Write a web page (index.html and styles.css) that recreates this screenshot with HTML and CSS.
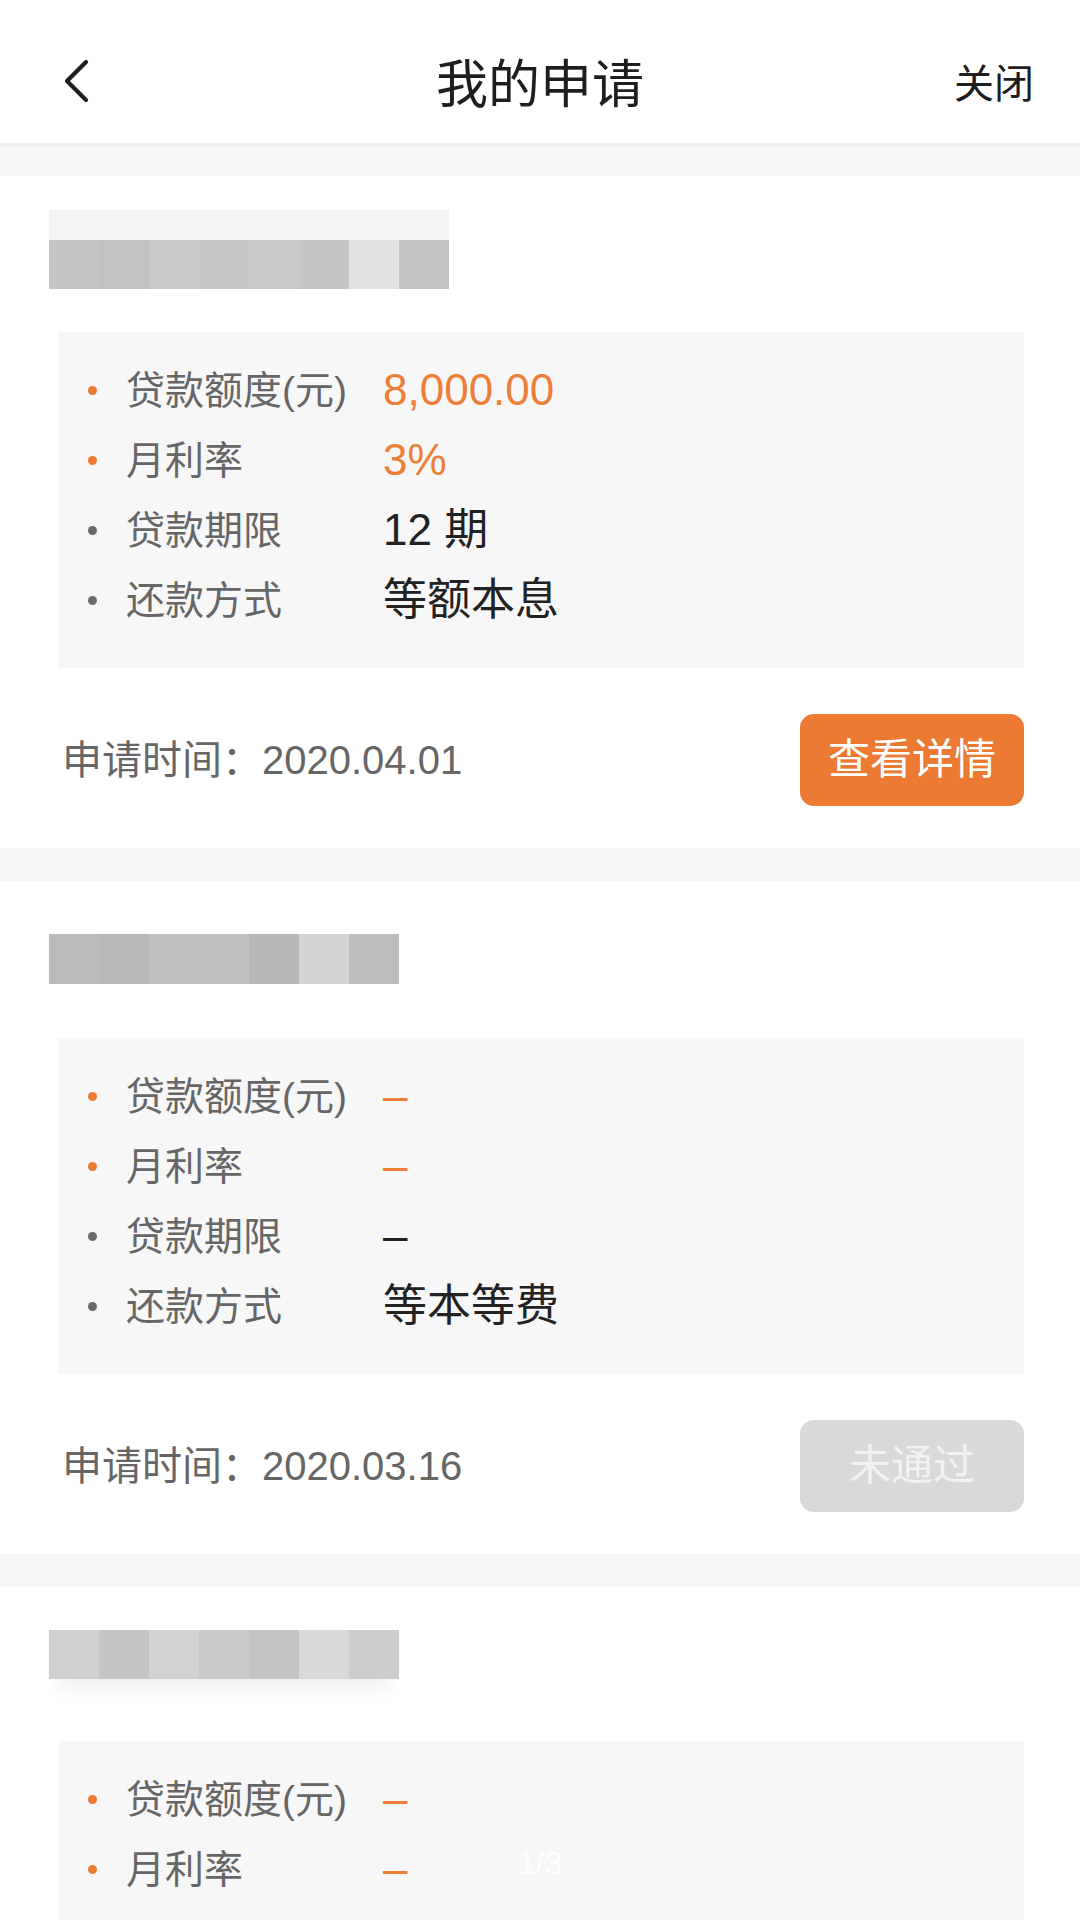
FILE: index.html
```html
<!DOCTYPE html>
<html lang="zh-CN">
<head>
<meta charset="utf-8">
<title>我的申请</title>
<link rel="stylesheet" href="styles.css">
</head>
<body>
<div class="page">
  <header class="nav">
    <span class="nav-back">
      <svg width="28" height="44" viewBox="0 0 28 44"><path d="M24 3 L5 22 L24 41" fill="none" stroke="#1e1e1e" stroke-width="4.2" stroke-linecap="round" stroke-linejoin="round"/></svg>
    </span>
    <h1 class="nav-title">我的申请</h1>
    <span class="nav-close">关闭</span>
  </header>

  <main class="list">
    <section class="card">
      <div class="name name--a">
        <i class="px c1"></i><i class="px c2"></i><i class="px c3"></i><i class="px c4"></i><i class="px c5"></i><i class="px c6"></i><i class="px c7"></i><i class="px c8"></i>
      </div>
      <ul class="terms">
        <li class="term term--hi"><span class="dot"></span><span class="term-label">贷款额度(元)</span><span class="term-value">8,000.00</span></li>
        <li class="term term--hi"><span class="dot"></span><span class="term-label">月利率</span><span class="term-value">3%</span></li>
        <li class="term"><span class="dot"></span><span class="term-label">贷款期限</span><span class="term-value">12 期</span></li>
        <li class="term"><span class="dot"></span><span class="term-label">还款方式</span><span class="term-value">等额本息</span></li>
      </ul>
      <div class="card-foot">
        <span class="apply-time">申请时间：2020.04.01</span>
        <span class="btn btn--primary">查看详情</span>
      </div>
    </section>

    <section class="card">
      <div class="name name--b">
        <i class="px d1"></i><i class="px d2"></i><i class="px d3"></i><i class="px d4"></i><i class="px d5"></i><i class="px d6"></i><i class="px d7"></i>
      </div>
      <ul class="terms">
        <li class="term term--hi"><span class="dot"></span><span class="term-label">贷款额度(元)</span><span class="term-value">–</span></li>
        <li class="term term--hi"><span class="dot"></span><span class="term-label">月利率</span><span class="term-value">–</span></li>
        <li class="term"><span class="dot"></span><span class="term-label">贷款期限</span><span class="term-value">–</span></li>
        <li class="term"><span class="dot"></span><span class="term-label">还款方式</span><span class="term-value">等本等费</span></li>
      </ul>
      <div class="card-foot">
        <span class="apply-time">申请时间：2020.03.16</span>
        <span class="btn btn--muted">未通过</span>
      </div>
    </section>

    <section class="card">
      <div class="name name--c">
        <i class="px e1"></i><i class="px e2"></i><i class="px e3"></i><i class="px e4"></i><i class="px e5"></i><i class="px e6"></i><i class="px e7"></i>
      </div>
      <ul class="terms">
        <li class="term term--hi"><span class="dot"></span><span class="term-label">贷款额度(元)</span><span class="term-value">–</span></li>
        <li class="term term--hi"><span class="dot"></span><span class="term-label">月利率</span><span class="term-value">–</span></li>
        <li class="term"><span class="dot"></span><span class="term-label">贷款期限</span><span class="term-value">–</span></li>
        <li class="term"><span class="dot"></span><span class="term-label">还款方式</span><span class="term-value">等本等费</span></li>
      </ul>
    </section>
  </main>

  <div class="pager">1/3</div>
</div>
</body>
</html>
```

FILE: styles.css
```css
* { box-sizing: border-box; }

html, body {
  margin: 0;
  padding: 0;
}

body {
  width: 1080px;
  height: 1920px;
  overflow: hidden;
  background: #f6f6f6;
  font-family: "Liberation Sans", "Noto Sans CJK SC", sans-serif;
  color: #222;
}

.page {
  position: relative;
  width: 1080px;
  height: 1920px;
  overflow: hidden;
}

/* ---------- nav ---------- */
.nav {
  height: 147px;
  background: #fff;
  display: flex;
  align-items: center;
  justify-content: space-between;
  padding: 22px 46px 4px 62px;
  position: relative;
  border-bottom: 4px solid #efefef;
}

.nav-back {
  display: flex;
  width: 40px;
}

.nav-title {
  position: absolute;
  left: 0;
  right: 0;
  top: 22px;
  bottom: 4px;
  margin: 0;
  display: flex;
  align-items: center;
  justify-content: center;
  font-family: "Noto Sans CJK SC", sans-serif;
  font-size: 52px;
  font-weight: 400;
  color: #1e1e1e;
  pointer-events: none;
}

.nav-close {
  font-family: "Noto Sans CJK SC", sans-serif;
  font-size: 40px;
  color: #1e1e1e;
  line-height: 1;
}

/* ---------- list ---------- */
.list {
  display: flex;
  flex-direction: column;
  gap: 33px;
  padding-top: 29px;
}

.card {
  background: #fff;
  padding: 0 56px 42px 58px;
}

/* blurred name */
.name {
  display: flex;
  height: 49px;
  margin-left: -9px;
  width: max-content;
}

.name--a { margin-top: 64px; margin-bottom: 43px; box-shadow: 0 -30px 0 0 #f3f3f3; }
.name--b { margin-top: 53px; margin-bottom: 54px; height: 50px; }
.name--c { margin-top: 43px; margin-bottom: 62px; box-shadow: 0 22px 14px -10px rgba(0,0,0,0.05); }

.px { display: block; width: 50px; height: 100%; }

.c1 { background: #c4c4c4; }
.c2 { background: #c2c2c2; }
.c3 { background: #cacaca; }
.c4 { background: #c8c8c8; }
.c5 { background: #c9c9c9; }
.c6 { background: #c5c5c5; }
.c7 { background: #e2e2e2; }
.c8 { background: #c4c4c4; }

.d1 { background: #bbbbbb; }
.d2 { background: #b8b8b8; }
.d3 { background: #c0c0c0; }
.d4 { background: #bfbfbf; }
.d5 { background: #b7b7b7; }
.d6 { background: #d4d4d4; }
.d7 { background: #bdbdbd; }

.e1 { background: #d0d0d0; }
.e2 { background: #c4c4c4; }
.e3 { background: #d2d2d2; }
.e4 { background: #cacaca; }
.e5 { background: #c4c4c4; }
.e6 { background: #dadada; }
.e7 { background: #cdcdcd; }

/* terms box */
.terms {
  list-style: none;
  margin: 0;
  background: #f7f7f7;
  height: 336px;
  padding: 23px 0 33px 30px;
}

.term {
  display: flex;
  align-items: center;
  height: 70px;
}

.dot {
  flex: none;
  width: 9px;
  height: 9px;
  border-radius: 50%;
  background: #6a6a6a;
  margin-right: 29px;
}

.term-label {
  flex: none;
  width: 257px;
  font-size: 39px;
  line-height: 1;
  color: #666;
}

.term-value {
  font-size: 44px;
  line-height: 1;
  color: #222;
}

.term--hi .dot { background: #ec7a33; }
.term--hi .term-value { color: #ec7e38; }

/* footer */
.card-foot {
  display: flex;
  align-items: center;
  justify-content: space-between;
  margin-top: 46px;
  padding-left: 4px;
}

.apply-time {
  font-size: 40px;
  line-height: 1;
  color: #666;
}

.btn {
  width: 224px;
  height: 92px;
  border-radius: 14px;
  display: flex;
  align-items: center;
  justify-content: center;
  font-size: 42px;
  line-height: 1;
}

.btn--primary {
  background: #ec7a33;
  color: #fff;
}

.btn--muted {
  background: #d9d9d9;
  color: #f2f2f2;
}

/* pager overlay */
.pager {
  position: absolute;
  left: 0;
  right: 0;
  top: 1843px;
  text-align: center;
  font-size: 32px;
  line-height: 40px;
  color: rgba(255,255,255,0.9);
}
```
